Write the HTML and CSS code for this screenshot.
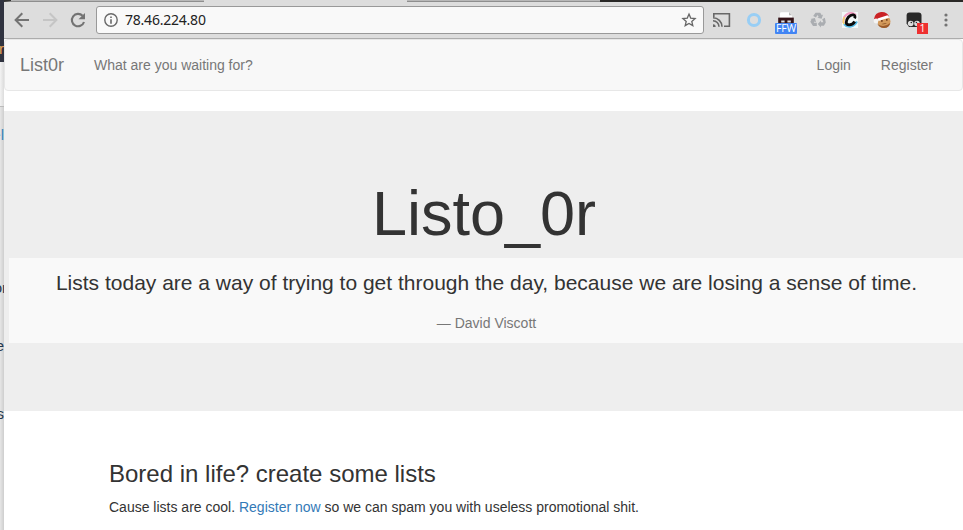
FILE: index.html
```html
<!DOCTYPE html>
<html lang="en">
<head>
<meta charset="utf-8">
<title>List0r</title>
<link rel="stylesheet" href="styles.css">
</head>
<body>
<div class="desktop">
  <aside class="behind">
    <div class="behind-head"><span>r</span></div>
    <div class="behind-bar"></div>
    <div class="behind-body">
      <span class="link">el</span>
      <span class="clipped-right">or</span>
      <span>e</span>
      <span>s</span>
    </div>
  </aside>
  <div class="window">
    <div class="tabs"><i class="tab first"></i><i class="tab active"></i><i class="tab"></i><i class="frame"></i></div>
    <div class="toolbar">
      <div class="nav-icons">
        <svg width="28" height="28" viewBox="0 0 28 28" fill="none" stroke="#737373" stroke-width="2"><path d="M21 14H8M14.3 7.3 7.6 14l6.7 6.7"/></svg>
        <svg width="28" height="28" viewBox="0 0 28 28" fill="none" stroke="#c5c5c5" stroke-width="2"><path d="M7 14h13M13.7 7.3l6.7 6.7-6.7 6.7"/></svg>
        <svg width="28" height="28" viewBox="0 0 28 28"><path d="M18.6 9.8A6.2 6.2 0 1 0 20 16" fill="none" stroke="#737373" stroke-width="2.1"/><path d="M21 7v6.3h-6.5z" fill="#737373"/></svg>
      </div>
      <div class="address">
        <svg width="14" height="14" viewBox="0 0 14 14"><circle cx="7" cy="7" r="6.2" fill="none" stroke="#686868" stroke-width="1.4"/><path d="M6.2 3.4h1.6V5H6.2zM6.2 6.2h1.6v4.5H6.2z" fill="#686868"/></svg>
        <span class="url">78.46.224.80</span>
        <svg width="16" height="16" viewBox="0 0 16 16" fill="none" stroke="#666" stroke-width="1.3"><path d="m8 2.1 1.7 4 4.4.4-3.3 2.9 1 4.2L8 11.4l-3.8 2.2 1-4.2L1.9 6.5l4.4-.4z"/></svg>
      </div>
      <div class="extensions">
        <div class="ext"><svg width="20" height="18" viewBox="0 0 20 18" fill="none" stroke="#686868" stroke-width="1.6"><path d="M1.8 6V2.8h15.6v12.4H12M1 9.8a6 6 0 0 1 6 6M1 6.8a9 9 0 0 1 9 9"/><path d="M1 13.2A2.6 2.6 0 0 1 3.6 16H1z" fill="#686868" stroke="none"/></svg></div>
        <div class="ext"><svg width="16" height="16" viewBox="0 0 16 16"><circle cx="8" cy="8" r="5.6" fill="none" stroke="#98cef5" stroke-width="3"/></svg></div>
        <div class="ext"><svg width="16" height="16" viewBox="0 0 16 16"><path d="M2 7V1.5Q2 .3 3.3.3H11L14 3.3V7z" fill="#fff"/><path d="M11 .3v3h3z" fill="#bbb"/><path d="M.2 5.6h15.6V12H.2z" fill="#351419"/><path d="M3.2 8.6h3.4v1.8H3.2zm6.2 0h3.4v1.8H9.4z" fill="#ddd"/></svg><span class="badge blue">FFW</span></div>
        <div class="ext"><svg width="16" height="16" viewBox="0 0 16 16" fill="#aaadb1"><path d="M5.5.7h4.7l1.6 2.6 1.3-.7-1.5 4.2-4.3-1 1.4-.7L7.4 3 6 5.5 3.2 4z"/><path d="m12.2 7.2 2.7-1.4.9 4.7-1.9 3.3h-3v1.7L7.8 12l3.1-3.4v1.7h2.5z"/><path d="m.5 7 4.4-1.1 1.2 4.3-1.5-.8-.9 1.3h3.1v3.2H3L.3 9.7l1.2-2.1z"/></svg></div>
        <div class="ext"><svg width="16" height="16" viewBox="0 0 16 16" fill="none"><path d="M0 0h16v16H0z" fill="#f2f8f8"/><path d="M14 3Q10-.3 5.5 2T1.5 11" stroke="#f3a1c5" stroke-width="2.2"/><path d="M2 12q3 3.6 7 2.5t6-5" stroke="#55bce8" stroke-width="2"/><path d="M2.5 5Q.5 9 2 12" stroke="#f3d768" stroke-width="1.6"/><path d="M12.6 6.4C14.5 2.4 9.6 1.5 6.5 5c-3.2 3.8-3 7.8.5 7.8 2.5 0 4.6-1.2 5.7-3.3" stroke="#0b0b0b" stroke-width="2.8"/></svg></div>
        <div class="ext"><svg width="18" height="18" viewBox="0 0 18 18"><circle cx="11" cy="10.5" r="6.5" fill="#d39a5b"/><path d="M4.5 13q6 4.5 12.8-1-1 5-6.3 5-4.6 0-6.5-4" fill="#9b5b2b"/><path d="M8 9h1.7v1.8H8zm5-1h1.6v1.8H13zM8.5 13q3 .9 5.5-1" fill="#74401d"/><path d="M1 8Q2 1.5 8 1q6-.5 8 4.5L5 9 2 10z" fill="#ca2225"/><path d="m4.5 7.4 10-3.2 2 2.2L5.5 10z" fill="#fff"/><circle cx="3" cy="10" r="2.4" fill="#f4f4f4"/></svg></div>
        <div class="ext"><svg width="16" height="16" viewBox="0 0 16 16"><path d="M3.5.5h9Q15.5.5 15.5 3.5V15H3L.6 11.5v-8Q.6.5 3.5.5z" fill="#292929"/><circle cx="4.7" cy="11.5" r="2.8" fill="#ddd"/><circle cx="11" cy="11.5" r="2.8" fill="#ddd"/><circle cx="5.3" cy="10.5" r=".8" fill="#292929"/><circle cx="10.4" cy="10.5" r=".8" fill="#292929"/></svg><span class="badge red">1</span></div>
        <div class="ext"><svg width="4" height="16" viewBox="0 0 4 16" fill="#737373"><circle cx="2" cy="3" r="1.6"/><circle cx="2" cy="8" r="1.6"/><circle cx="2" cy="13" r="1.6"/></svg></div>
      </div>
    </div>
    <nav class="navbar">
      <a class="brand">List0r</a>
      <a class="tagline">What are you waiting for?</a>
      <a class="login">Login</a>
      <a>Register</a>
    </nav>
    <header class="jumbotron">
      <h1>Listo_0r</h1>
      <blockquote>
        <p>Lists today are a way of trying to get through the day, because we are losing a sense of time.</p>
        <footer>— David Viscott</footer>
      </blockquote>
    </header>
    <main>
      <h2>Bored in life? create some lists</h2>
      <p>Cause lists are cool. <a>Register now</a> so we can spam you with useless promotional shit.</p>
    </main>
  </div>
</div>
</body>
</html>
```
FILE: styles.css
```css
* { box-sizing: border-box; }
body { margin: 0; overflow: hidden; font: 14px/20px "Liberation Sans", Arial, sans-serif; color: #333; background: #fff; }
h1, h2, p, blockquote { margin: 0; font-weight: 400; }
svg { display: block; flex: none; }
.desktop { display: grid; grid-template-columns: 4px 959px; height: 530px; }

.behind { overflow: hidden; height: 530px; background: linear-gradient(90deg, #e6e6e6, #cecece); }
.behind span { display: flex; justify-content: flex-end; width: 4px; font-size: 15px; line-height: 20px; }
.behind-head { height: 62px; padding-top: 39px; background: #303340; color: #e8a558; }
.behind-bar { height: 45px; border-bottom: 1px solid #bbb; background: linear-gradient(90deg, #f3f3f3, #dcdcdc); }
.behind-body { display: grid; grid-template-rows: 153px 58px 68px 40px; padding-top: 18px; color: #26384c; }
.behind-body .link { color: #3585bd; }
.behind-body .clipped-right { width: 7px; }

.window { min-width: 0; background: #fff; }
.tabs { display: flex; height: 2px; background: #ddd; }
.tab { flex: 0 0 193px; height: 2px; background: #b8b8b8; border-bottom: 1px solid #8e8e8e; }
.tab.first { flex-basis: 200px; border-left: 7px solid #333; }
.tab.active { flex-basis: 203px; background: #ddd; border: 0; }
.frame { flex: 1; background: #292826; }
.toolbar { display: flex; align-items: center; height: 37px; padding: 0 1px 0 4px; background: #ddd; border-bottom: 1px solid #acacac; }
.nav-icons { display: flex; margin-right: 4px; }
.address { display: flex; align-items: center; width: 608px; height: 28px; padding: 0 6px 0 7px; margin-right: 2px; background: #f9f9f9; border: 1px solid #999; border-radius: 3px; }
.url { flex: 1; padding-left: 7px; font: 14px/20px "Noto Sans", sans-serif; color: #222; letter-spacing: -.22px; }
.extensions { display: flex; }
.ext { position: relative; display: flex; align-items: center; justify-content: center; width: 32px; height: 28px; }
.badge { position: absolute; height: 11px; color: #fff; font: 10.5px/11px "Open Sans", sans-serif; text-align: center; }
.blue { left: 5px; top: 17px; width: 22px; background: #4285f4; border-radius: 1px; letter-spacing: -.2px; }
.red { right: 2px; top: 17px; width: 11px; background: #ee3030; }

.navbar { display: flex; align-items: center; height: 52px; padding: 0 29px 0 15px; color: #777; background: #f8f8f8; border: 1px solid #e7e7e7; border-radius: 4px; }
.brand { width: 74px; font-size: 18px; }
.tagline { flex: 1; }
.login { margin-right: 30px; }

.jumbotron { height: 300px; margin-top: 20px; padding: 68px 0 0 5px; background: #eee; }
h1 { padding-right: 4px; font-size: 63px; line-height: 69px; text-align: center; margin-bottom: 10px; }
blockquote { height: 85px; padding: 10px 0 10px 1px; text-align: center; background: #f9f9f9; }
blockquote p { font-size: 21px; line-height: 30px; margin-bottom: 15px; }
blockquote footer { color: #777; }

main { padding: 50px 0 0 105px; }
h2 { font-size: 24px; line-height: 26px; margin-bottom: 10px; }
main a { color: #337ab7; }
```
